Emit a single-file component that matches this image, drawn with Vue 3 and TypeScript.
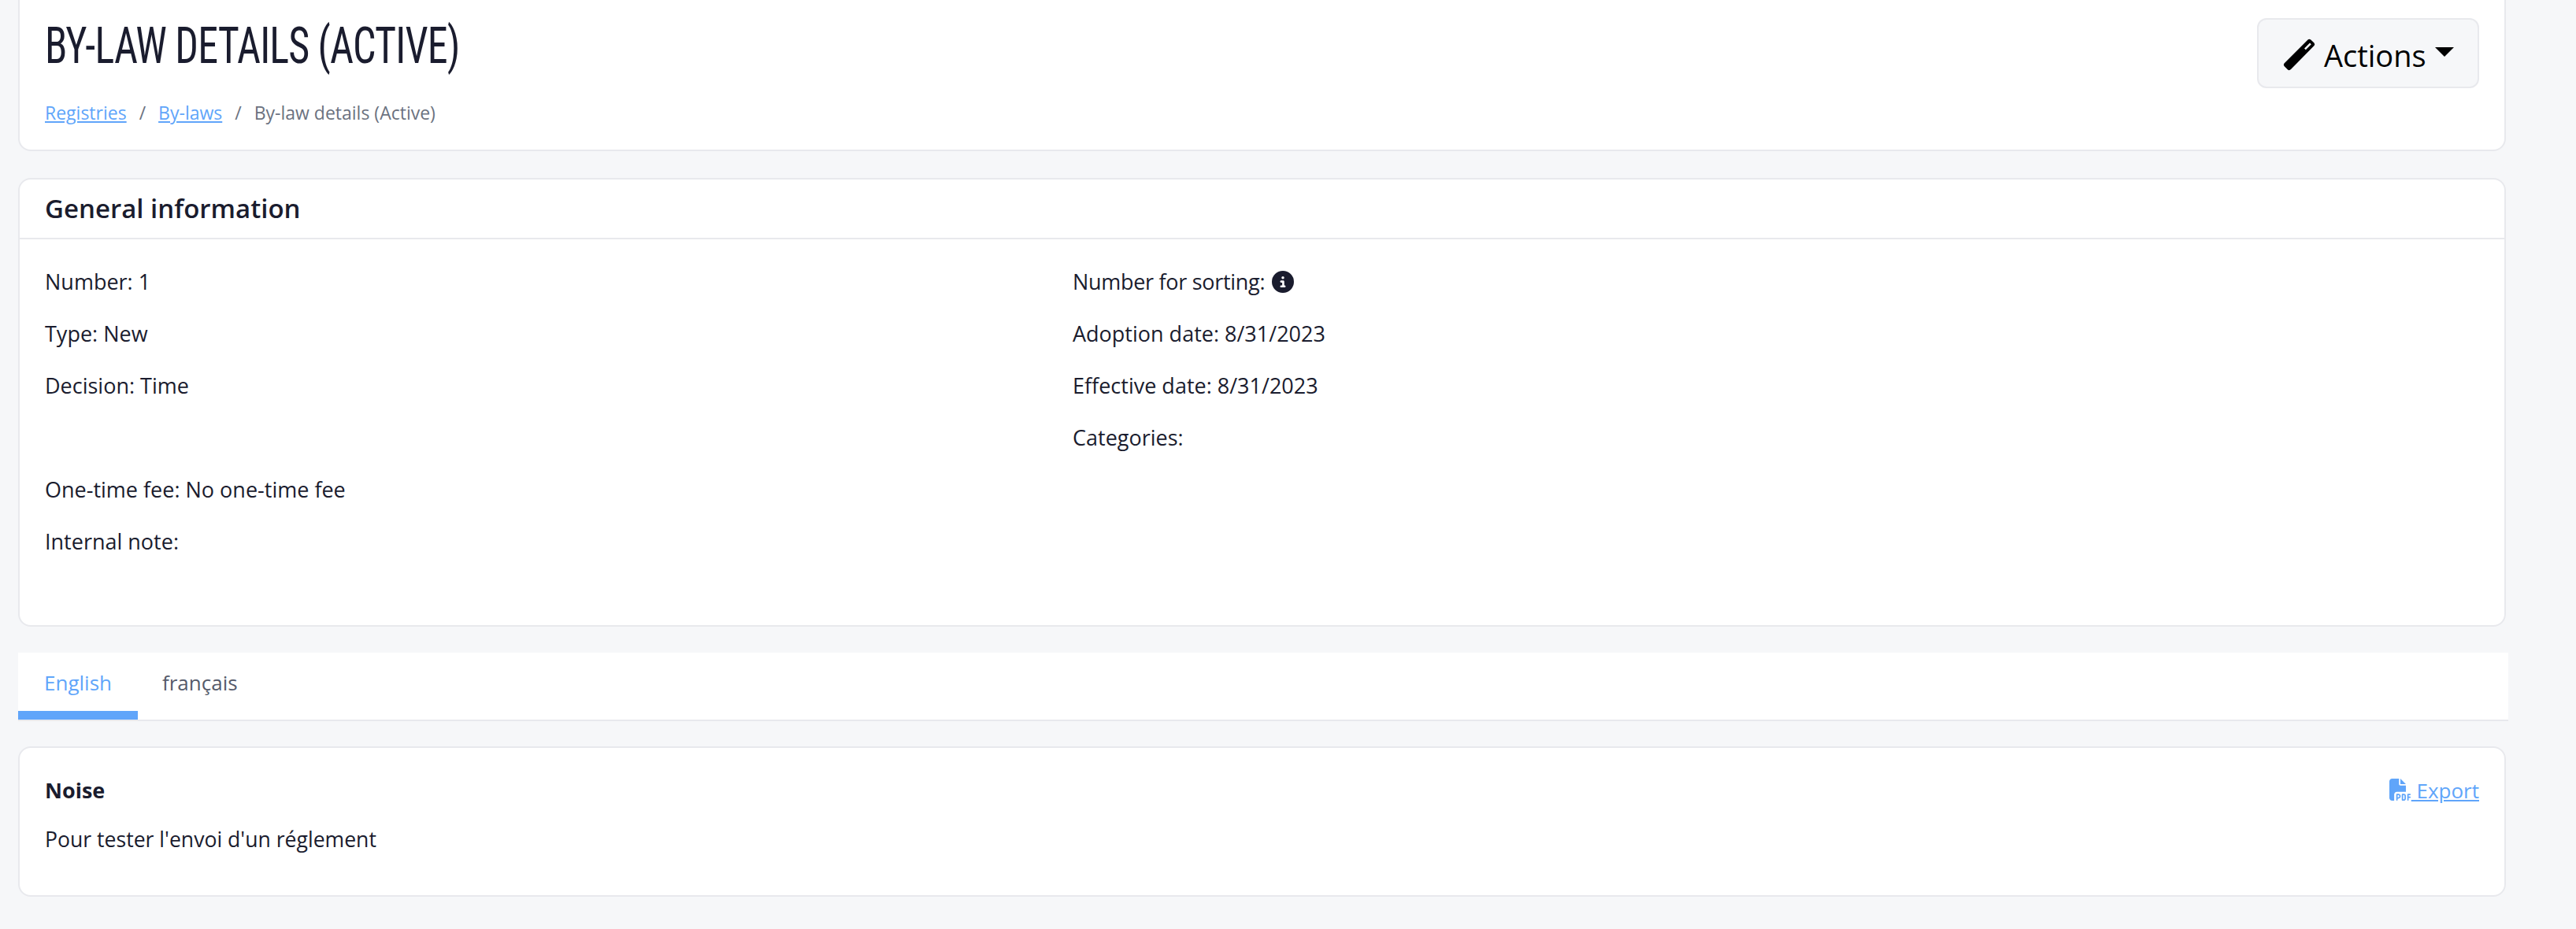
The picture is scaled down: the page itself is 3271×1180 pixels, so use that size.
<script setup lang="ts">
const leftFields = ['Number: 1', 'Type: New', 'Decision: Time', '', 'One-time fee: No one-time fee', 'Internal note:']
const rightFields = ['Adoption date: 8/31/2023', 'Effective date: 8/31/2023', 'Categories:']
</script>

<template>
  <div class="page">
    <section class="card head">
      <div>
        <h1 class="title">BY-LAW DETAILS (ACTIVE)</h1>
        <nav class="crumbs">
          <a href="#">Registries</a>
          <span class="sep">/</span>
          <a href="#">By-laws</a>
          <span class="sep">/</span>
          <span>By-law details (Active)</span>
        </nav>
      </div>
      <button class="actions" type="button">
        <svg class="wand" viewBox="0 0 41 41" fill="currentColor">
          <path fill-rule="evenodd" d="M31.500 1.500 Q33 0 35 1.200 L39.500 5.500 Q41 7.500 39.500 9 L10 39 Q8 41 6 39.500 L1.500 35 Q0 33 1.500 31.500 Z M34 5.500 L27 12.500 L28.800 14.300 L35.800 7.300 Z" />
        </svg>
        <span>Actions</span>
        <i class="caret"></i>
      </button>
    </section>

    <section class="card info">
      <h2 class="info-title">General information</h2>
      <div class="info-body">
        <div class="col">
          <p v-for="(field, i) in leftFields" :key="i" class="field">{{ field }}</p>
        </div>
        <div class="col">
          <p class="field sorting">
            Number for sorting:
            <svg class="info-icon" viewBox="0 0 512 512" fill="currentColor">
              <path d="M256 512A256 256 0 1 0 256 0a256 256 0 1 0 0 512zM216 336h24V272H216c-13.300 0-24-10.700-24-24s10.700-24 24-24h48c13.300 0 24 10.700 24 24v88h8c13.300 0 24 10.700 24 24s-10.700 24-24 24H216c-13.300 0-24-10.700-24-24s10.700-24 24-24zm40-208a32 32 0 1 1 0 64 32 32 0 1 1 0-64z" />
            </svg>
          </p>
          <p v-for="field in rightFields" :key="field" class="field">{{ field }}</p>
        </div>
      </div>
    </section>

    <div class="tabs">
      <a class="tab active" href="#">English</a>
      <a class="tab" href="#">français</a>
    </div>

    <section class="card noise">
      <div class="noise-text">
        <strong class="noise-title">Noise</strong>
        <p class="noise-desc">Pour tester l'envoi d'un réglement</p>
      </div>
      <a class="export" href="#">
        <svg class="pdf" viewBox="0 0 512 512" fill="currentColor">
          <path d="M0 64C0 28.700 28.700 0 64 0H224V128c0 17.700 14.300 32 32 32H384V304H176c-35.300 0-64 28.700-64 64V512H64c-35.300 0-64-28.700-64-64V64zm384 64H256V0L384 128zM176 352h32c30.900 0 56 25.100 56 56s-25.100 56-56 56H192v32c0 8.800-7.200 16-16 16s-16-7.200-16-16V448 368c0-8.800 7.200-16 16-16zm32 80c13.300 0 24-10.700 24-24s-10.700-24-24-24H192v48h16zm96-80h32c26.500 0 48 21.500 48 48v64c0 26.500-21.500 48-48 48H304c-8.800 0-16-7.200-16-16V368c0-8.800 7.200-16 16-16zm32 128c8.800 0 16-7.200 16-16V400c0-8.800-7.200-16-16-16H320v96h16zm80-112c0-8.800 7.200-16 16-16h48c8.800 0 16 7.200 16 16s-7.200 16-16 16H448v32h32c8.800 0 16 7.200 16 16s-7.200 16-16 16H448v48c0 8.800-7.200 16-16 16s-16-7.200-16-16V432 368z" />
        </svg>
        <span>&nbsp;Export</span>
      </a>
    </section>
  </div>
</template>

<style>
html,
body {
  background: #f6f7f9;
}
</style>

<style scoped>
.page {
  box-sizing: border-box;
  width: 3271px;
  height: 1180px;
  overflow: hidden;
  padding: 0 89px 0 23px;
  background: #f6f7f9;
  color: #1a1c2e;
  font-family: "Open Sans", "Noto Sans", sans-serif;
  font-size: 27px;
  line-height: 42px;
}

.card {
  box-sizing: border-box;
  background: #fff;
  border: 2px solid #e8e9ed;
  border-radius: 16px;
}

.head {
  display: flex;
  justify-content: space-between;
  height: 194px;
  margin-top: -2px;
  padding: 27px 32px 0;
  border-top: 0;
  border-top-left-radius: 0;
  border-top-right-radius: 0;
}

/* no Oswald here: condensed Roboto squeezed a bit further */
.title {
  margin: 0;
  font-family: Roboto, "Liberation Sans", sans-serif;
  font-size: 64px;
  font-stretch: 75%;
  font-weight: 400;
  letter-spacing: -1px;
  line-height: 68px;
  white-space: nowrap;
  transform: scaleX(0.813);
  transform-origin: left center;
}

.crumbs {
  display: flex;
  margin-top: 32px;
  color: #6b7280;
  font-size: 23px;
  line-height: 36px;
}

.crumbs a {
  color: #60a5fa;
}

.sep {
  margin: 0 16px;
}

.actions {
  display: flex;
  align-items: center;
  box-sizing: border-box;
  width: 282px;
  height: 89px;
  margin-top: -2px;
  padding: 4px 0 0 31px;
  background: #f6f7f9;
  border: 2px solid #e8e9ed;
  border-radius: 12px;
  color: #000;
  font-family: inherit;
  font-size: 38px;
}

.wand {
  width: 41px;
  height: 41px;
  margin-right: 11px;
}

.caret {
  width: 0;
  height: 0;
  margin: -7px 0 0 11px;
  border-top: 12px solid #000;
  border-left: 12px solid transparent;
  border-right: 12px solid transparent;
}

.info {
  height: 570px;
  margin-top: 34px;
}

.info-title {
  box-sizing: border-box;
  height: 76px;
  margin: 0;
  padding: 0 32px;
  border-bottom: 2px solid #e8e9ed;
  font-size: 33px;
  font-weight: 600;
  line-height: 74px;
}

.info-body {
  display: grid;
  grid-template-columns: 1305px 1fr;
  padding: 33px 32px 0;
}

.field {
  height: 42px;
  margin: 0 0 24px;
  white-space: nowrap;
}

.sorting {
  display: flex;
  align-items: center;
  gap: 9px;
  letter-spacing: -0.3px;
}

.info-icon {
  width: 28px;
  height: 28px;
}

.tabs {
  display: flex;
  box-sizing: border-box;
  width: 3162px;
  height: 87px;
  margin-top: 33px;
  background: #fff;
  border-bottom: 2px solid #e8e9ed;
  font-size: 26px;
}

.tab {
  box-sizing: border-box;
  height: 85px;
  padding: 17px 33px 0;
  color: #565b6b;
  text-decoration: none;
}

.tab + .tab {
  padding-left: 31px;
}

.tab.active {
  color: #60a5fa;
  border-bottom: 11px solid #60a5fa;
}

.noise {
  display: flex;
  justify-content: space-between;
  height: 191px;
  margin-top: 32px;
  padding: 33px 32px 0;
}

.noise-title {
  display: block;
  font-weight: 700;
}

.noise-desc {
  margin: 20px 0 0;
  font-size: 26.6px;
}

.export {
  display: flex;
  align-items: flex-start;
  height: 42px;
  color: #60a5fa;
  font-size: 26px;
}

.pdf {
  width: 28px;
  height: 28px;
  margin-top: 6px;
}
</style>
